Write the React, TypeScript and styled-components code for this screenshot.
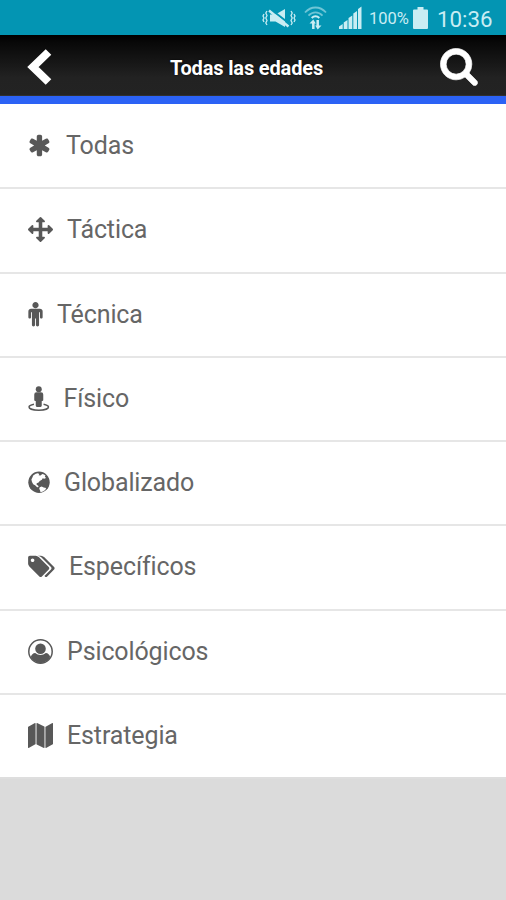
import React from "react";
import styled, { createGlobalStyle } from "styled-components";

const GlobalStyle = createGlobalStyle`
  html, body { margin: 0; padding: 0; }
  body { background: #dbdbdb; font-family: Roboto, "Liberation Sans", sans-serif; }
`;

const Screen = styled.div`
  display: flex;
  flex-direction: column;
  width: 100%;
  height: 900px;
  overflow: hidden;
  background: #dbdbdb;
`;

const StatusBar = styled.div`
  display: flex;
  flex: none;
  align-items: center;
  height: 35px;
  padding-left: 262px;
  box-sizing: border-box;
  background: #0395b3;
  color: #c9edf3;
`;

const StatusIcon = styled.svg<{ $gap: number }>`
  display: block;
  flex: none;
  margin-right: ${(p) => p.$gap}px;
`;

const StatusText = styled.span<{ $size: number; $width: number }>`
  flex: none;
  width: ${(p) => p.$width}px;
  padding-top: 2px;
  font-size: ${(p) => p.$size}px;
  line-height: 30px;
  white-space: nowrap;
`;

const Header = styled.header`
  display: grid;
  flex: none;
  grid-template-columns: 80px 1fr 94px;
  align-items: center;
  height: 69px;
  box-sizing: border-box;
  border-bottom: 8px solid #2b62f5;
  background: linear-gradient(#000 0%, #080808 12%, #222 70%, #232323 100%);
  box-shadow: inset 0 -1px 0 #303030;
`;

const HeaderButton = styled.button<{ $indent: number }>`
  display: flex;
  padding: 2px 0 0 ${(p) => p.$indent}px;
  border: 0;
  background: none;
  color: #fff;
`;

const Title = styled.h1`
  margin: 0;
  padding: 5px 0 0 1px;
  color: #fff;
  font-size: 20px;
  font-weight: 700;
  line-height: 24px;
  letter-spacing: -0.15px;
  text-align: center;
  text-shadow: 0 0 2px #000;
`;

const List = styled.ul`
  display: grid;
  flex: none;
  grid-template-rows: repeat(8, 1fr);
  height: 674px;
  margin: 0;
  padding: 1px 0 0;
  list-style: none;
  background: #fff;
`;

const Row = styled.li`
  display: flex;
  align-items: center;
  padding: 0 0 1px 28px;
  border-bottom: 2px solid #e6e6e6;
  color: #585858;

  &:last-child {
    border-bottom-color: #dedede;
  }
`;

const RowIcon = styled.svg`
  display: block;
  flex: none;
  margin-right: 14px;
`;

const Label = styled.span`
  padding-top: 1px;
  color: #666;
  font-size: 25px;
  line-height: 32px;
  letter-spacing: -0.12px;
  white-space: nowrap;
`;

interface Category {
  name: string;
  width: number;
  viewBox: string;
  art: React.ReactNode;
}

const categories: Category[] = [
  {
    name: "Todas",
    width: 24,
    viewBox: "0 0 1664 1792",
    art: (
      <path transform="translate(-40 0)" d="M1482 1050q46 26 59.500 77.500t-12.500 97.500l-64 110q-26 46-77.500 59.500t-97.500-12.500l-266-153v307q0 52-38 90t-90 38h-128q-52 0-90-38t-38-90v-307l-266 153q-46 26-97.500 12.500t-77.500-59.500l-64-110q-26-46-12.500-97.500t59.500-77.500l266-154-266-154q-46-26-59.500-77.500t12.500-97.500l64-110q26-46 77.500-59.500t97.500 12.500l266 153v-307q0-52 38-90t90-38h128q52 0 90 38t38 90v307l266-153q46-26 97.500-12.500t77.500 59.500l64 110q26 46 12.500 97.500t-59.500 77.500l-266 154z" />
    ),
  },
  {
    name: "Táctica",
    width: 25,
    viewBox: "0 0 1792 1792",
    art: (
      <path d="M1792 896q0 26-19 45l-256 256q-19 19-45 19t-45-19-19-45v-128h-384v384h128q26 0 45 19t19 45-19 45l-256 256q-19 19-45 19t-45-19l-256-256q-19-19-19-45t19-45 45-19h128v-384h-384v128q0 26-19 45t-45 19-45-19l-256-256q-19-19-19-45t19-45l256-256q19-19 45-19t45 19 19 45v128h384v-384h-128q-26 0-45-19t-19-45 19-45l256-256q19-19 45-19t45 19l256 256q19 19 19 45t-19 45-45 19h-128v384h384v-128q0-26 19-45t45-19 45 19l256 256q19 19 19 45z" />
    ),
  },
  {
    name: "Técnica",
    width: 15,
    viewBox: "384 0 1024 1792",
    art: (
      <path d="M1408 672v416q0 40-28 68t-68 28-68-28-28-68v-352h-64v912q0 46-33 79t-79 33-79-33-33-79v-464h-64v464q0 46-33 79t-79 33-79-33-33-79v-912h-64v352q0 40-28 68t-68 28-68-28-28-68v-416q0-80 56-136t136-56h640q80 0 136 56t56 136zm-288-448q0 93-65.500 158.500t-158.500 65.500-158.500-65.500-65.500-158.500 65.500-158.500 158.500-65.500 158.500 65.500 65.500 158.500z" />
    ),
  },
  {
    name: "Físico",
    width: 21.5,
    viewBox: "0 0 21 25",
    art: (
      <>
        <circle cx="10.500" cy="3.200" r="3" />
        <path d="M8.300 6.300h4.400q2.300 0 2.300 2.300v5.400q0 1.100-1.100 1.100h-.4v4.500q0 1.300-1.200 1.300H8.700q-1.200 0-1.200-1.300v-4.500h-.4Q6 15.100 6 14V8.600q0-2.300 2.300-2.300z" />
        <path d="M5.700 18.200C2.700 18.800.8 19.700.8 20.900c0 1.900 4.300 3.300 9.700 3.300s9.700-1.400 9.700-3.300c0-1.200-1.900-2.100-4.900-2.700" fill="none" stroke="currentColor" strokeWidth="1.500" />
      </>
    ),
  },
  {
    name: "Globalizado",
    width: 22,
    viewBox: "0 0 22 25",
    art: (
      <>
        <circle cx="11" cy="12.300" r="10.700" />
        <path fill="#fff" d="M5.200 5.400 7.800 3.700l2-.5 1.500.8-.7 1.300 1.900.1 1.800-1.500 1.800.5 1.500 1.300-.8.9 1.200 1.500-1.800.7-1.500-.6-.8 1.600-2.200 1.200-1.100 1.600-1.900.7-.2 1.300 1.700 1.100.4 1.400-1.500.2-2-2.100-1.900-.9-1.200-2.200-.6-2.600 1.100-2.300z" />
        <path fill="#fff" d="m11.700 17.200 2-.7 2 .9 2.500.7-1 1.800-2.300 1.700-2.400.6-.5-2-.8-1.500z" />
      </>
    ),
  },
  {
    name: "Específicos",
    width: 27,
    viewBox: "0 0 1920 1792",
    art: (
      <path d="M448 448q0-53-37.500-90.500t-90.500-37.500-90.500 37.500-37.500 90.500 37.500 90.500 90.500 37.500 90.500-37.500 37.500-90.500zm1067 576q0 53-37 90l-491 492q-39 37-91 37-53 0-90-37l-715-716q-38-37-64.500-101t-26.500-117v-416q0-52 38-90t90-38h416q53 0 117 26.500t102 64.500l715 714q37 39 37 91zm384 0q0 53-37 90l-491 492q-39 37-91 37-36 0-59-14t-53-45l470-470q37-37 37-90 0-52-37-91l-715-714q-38-38-102-64.500t-117-26.500h224q53 0 117 26.500t102 64.500l715 714q37 39 37 91z" />
    ),
  },
  {
    name: "Psicológicos",
    width: 25,
    viewBox: "0 0 25 25",
    art: (
      <>
        <circle cx="12.500" cy="12.500" r="11.700" fill="none" stroke="currentColor" strokeWidth="1.500" />
        <circle cx="12.500" cy="9.700" r="5.300" />
        <path d="M2.800 18c.8-2.500 2.100-3.800 4.400-4 3 2.600 7.600 2.600 10.600 0 2.300.2 3.600 1.500 4.400 4-1.900 3.500-5.500 6-9.700 6s-7.800-2.500-9.700-6z" />
      </>
    ),
  },
  {
    name: "Estrategia",
    width: 25,
    viewBox: "0 0 1792 1792",
    art: (
      <path d="M512 0q13 0 22.500 9.500t9.500 22.500v1472q0 20-17 28l-480 256q-7 4-15 4-13 0-22.500-9.500t-9.500-22.500v-1472q0-20 17-28l480-256q7-4 15-4zm1248 0q13 0 22.500 9.500t9.500 22.500v1472q0 20-17 28l-480 256q-7 4-15 4-13 0-22.500-9.500t-9.500-22.500v-1472q0-20 17-28l480-256q7-4 15-4zm-1120 0q8 0 14 3l512 256q18 10 18 29v1472q0 13-9.500 22.500t-22.500 9.500q-8 0-14-3l-512-256q-18-10-18-29v-1472q0-13 9.500-22.500t22.500-9.500z" />
    ),
  },
];

function MutedIcon() {
  return (
    <StatusIcon $gap={8} width="34" height="24" viewBox="0 0 34 24" fill="none" stroke="currentColor">
      <path d="M8 8.500h5.500L23 3v18l-9.500-5.500H8z" fill="currentColor" stroke="none" />
      <path d="M9 3.500 28.500 18.500" stroke="#0395b3" strokeWidth="2" />
      <path d="M7 4.500 26.500 20.500" strokeWidth="2.400" />
      <path d="m5 5-1.200 2L5 9.500 3.800 12 5 14.500 3.800 17 5 19M2 8l-1 2 1 2-1 2 1 2M29 5l1.200 2L29 9.500l1.200 2.500-1.200 2.500 1.200 2.500-1.200 2M32 8l1 2-1 2 1 2-1 2" strokeWidth="1.300" />
    </StatusIcon>
  );
}

function WifiIcon() {
  return (
    <StatusIcon $gap={12} width="23" height="26" viewBox="0 0 23 26" fill="none" stroke="currentColor">
      <path d="M1 7.500C7 .8 16 .8 22 7.500M4.500 10.700c4-4.300 10-4.300 14 0" strokeWidth="1.800" opacity=".55" />
      <path d="M7.700 13c2.300-2.400 5.300-2.400 7.600 0" strokeWidth="2" />
      <path d="M9.300 24v-7M13.700 15v7" strokeWidth="2.500" />
      <path d="m5.500 18.500 3.800-4 2.500 4zM11.200 20.500l2.500 4 3.800-4z" fill="currentColor" stroke="none" />
    </StatusIcon>
  );
}

function SignalIcon() {
  return (
    <StatusIcon $gap={7} width="23" height="24" viewBox="0 0 23 24" fill="currentColor">
      <path d="M0 20.500 3.700 18v5H0zM4.700 16.500 8.500 14v9H4.700zM9.500 12l3.800-2.500V23H9.500zM14.300 7.500 18 5v18h-3.700zM19 3l3.500-2.500V23H19z" />
    </StatusIcon>
  );
}

function BatteryIcon() {
  return (
    <StatusIcon $gap={9} width="15" height="24" viewBox="0 0 15 24" fill="currentColor">
      <path d="M4.500 1h6v2.500H14q1 0 1 1V22q0 1-1 1H1q-1 0-1-1V4.500q0-1 1-1h3.500z" />
    </StatusIcon>
  );
}

export default function App() {
  return (
    <>
      <GlobalStyle />
      <Screen>
        <StatusBar>
          <MutedIcon />
          <WifiIcon />
          <SignalIcon />
          <StatusText $size={16.5} $width={44}>100%</StatusText>
          <BatteryIcon />
          <StatusText $size={22.3} $width={58}>10:36</StatusText>
        </StatusBar>
        <Header>
          <HeaderButton $indent={26} aria-label="Volver">
            <svg width="28" height="38" viewBox="0 0 28 38" fill="none" stroke="currentColor" strokeWidth="8">
              <path d="M22.500 4 7 19l15.500 15" />
            </svg>
          </HeaderButton>
          <Title>Todas las edades</Title>
          <HeaderButton $indent={28} aria-label="Buscar">
            <svg width="38" height="38" viewBox="44 108 1704 1704" fill="currentColor">
              <path d="M1216 832q0-185-131.500-316.500t-316.500-131.500-316.500 131.500-131.500 316.500 131.500 316.500 316.500 131.500 316.500-131.500 131.500-316.500zm512 832q0 52-38 90t-90 38q-54 0-90-38l-343-342q-179 124-399 124-143 0-273.500-55.500t-225-150-150-225-55.500-273.500 55.500-273.500 150-225 225-150 273.500-55.500 273.500 55.500 225 150 150 225 55.500 273.500q0 220-124 399l343 343q37 37 37 90z" stroke="currentColor" strokeWidth="30" />
            </svg>
          </HeaderButton>
        </Header>
        <List>
          {categories.map((item) => (
            <Row key={item.name}>
              <RowIcon width={item.width} height="25" viewBox={item.viewBox} fill="currentColor">
                {item.art}
              </RowIcon>
              <Label>{item.name}</Label>
            </Row>
          ))}
        </List>
      </Screen>
    </>
  );
}
